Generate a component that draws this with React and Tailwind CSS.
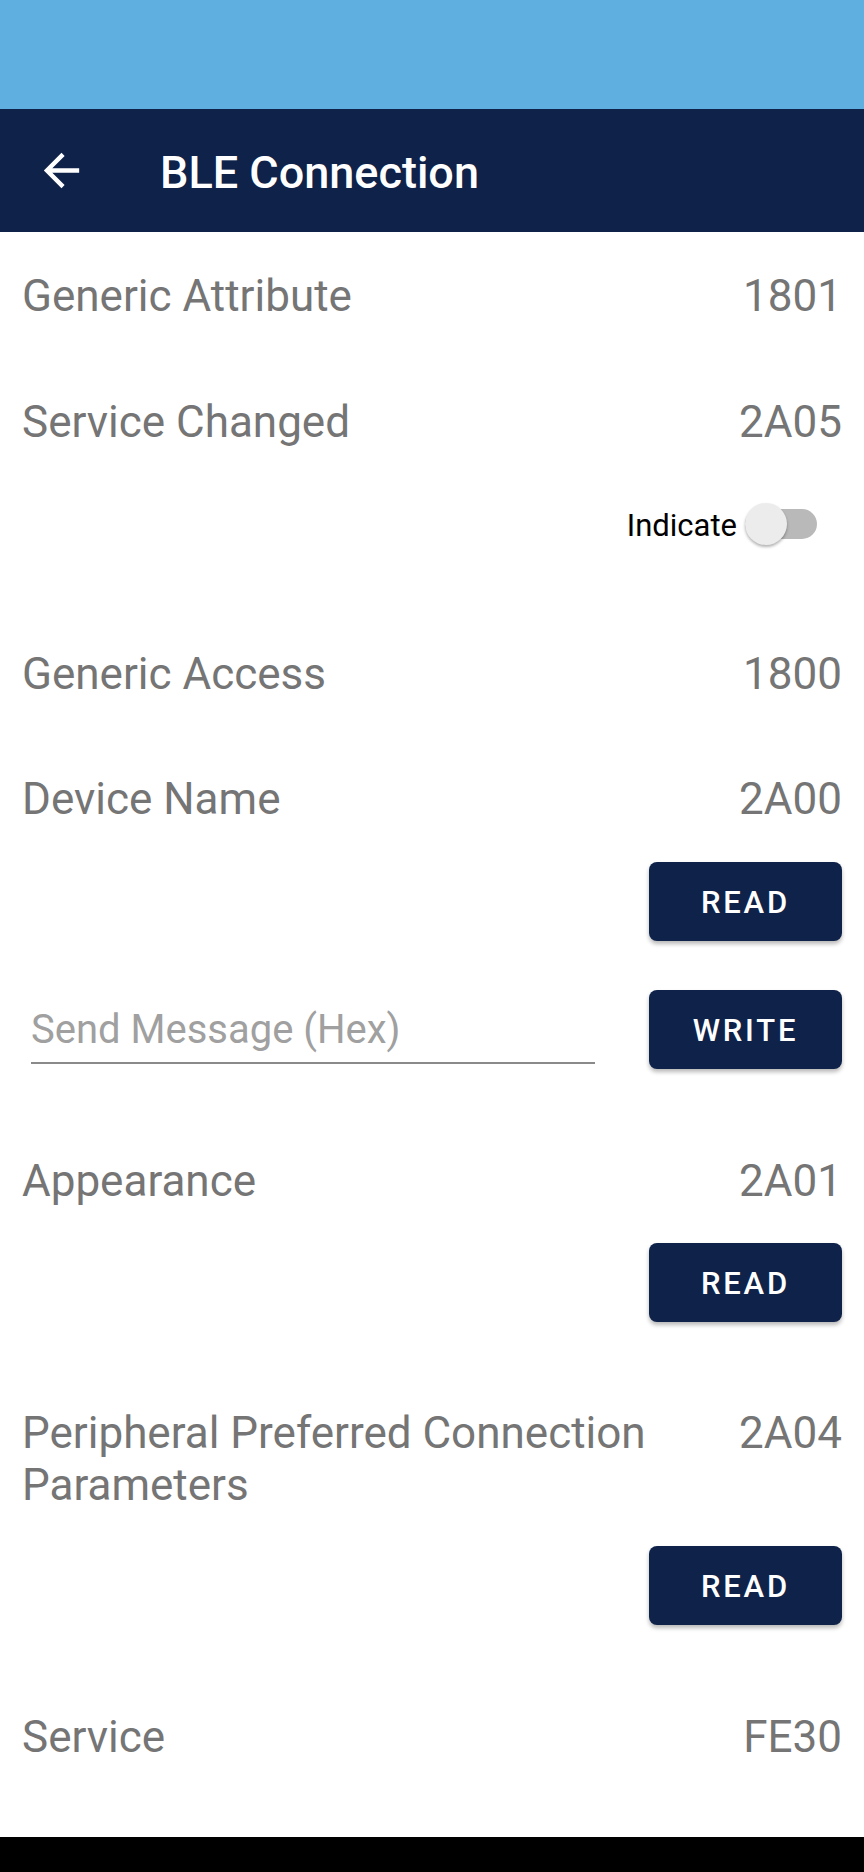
import React, { useState } from 'react'

function ReadButton({ label = 'READ' }) {
  return (
    <button className="w-[193px] h-[79px] shrink-0 pt-[4px] rounded-[8px] bg-[#0F2249] text-white text-[31px] font-medium tracking-[2.8px] shadow-[0_3px_4px_rgba(0,0,0,0.28)]">
      {label}
    </button>
  )
}

function Row({ label, value, className = '' }) {
  return (
    <div className={`flex justify-between gap-4 text-[44px] leading-[52px] text-[#757575] ${className}`}>
      <span className="flex-1 min-w-0">{label}</span>
      <span className="shrink-0 text-right">{value}</span>
    </div>
  )
}

export default function App() {
  const [indicate, setIndicate] = useState(false)
  const [message, setMessage] = useState('')

  return (
    <div className="w-[864px] h-[1872px] flex flex-col bg-white font-['Roboto',sans-serif]">
      {/* Status bar */}
      <div className="h-[109px] bg-[#5FAFE0]" />

      {/* Toolbar */}
      <header className="h-[123px] bg-[#0F2249] flex items-center">
        <div className="w-[123px] h-full flex items-center justify-center">
          <svg width="53" height="53" viewBox="0 0 24 24" fill="white">
            <path d="M20 11H7.83l5.59-5.59L12 4l-8 8 8 8 1.41-1.41L7.83 13H20v-2z" />
          </svg>
        </div>
        <h1 className="ml-[37px] pt-[4px] text-[45px] font-medium text-white">BLE Connection</h1>
      </header>

      {/* Services */}
      <div className="flex-1 flex flex-col px-[22px]">
        <Row label="Generic Attribute" value="1801" className="mt-[38px]" />
        <Row label="Service Changed" value="2A05" className="mt-[74px]" />

        <div className="mt-[54px] h-[44px] flex items-center justify-end">
          <span className="pt-[5px] text-[31px] text-black">Indicate</span>
          <button
            onClick={() => setIndicate(!indicate)}
            className="relative ml-[8px] mr-[25px] w-[72px] h-[44px]"
          >
            <span className={`absolute inset-x-0 top-[7px] h-[30px] rounded-full ${indicate ? 'bg-[#8a9bc0]' : 'bg-[#b9b9b9]'}`} />
            <span className={`absolute top-[1px] w-[42px] h-[42px] rounded-full shadow-[0_2px_3px_rgba(0,0,0,0.3)] ${indicate ? 'left-[30px] bg-[#0F2249]' : 'left-0 bg-[#ececec]'}`} />
          </button>
        </div>

        <Row label="Generic Access" value="1800" className="mt-[102px]" />
        <Row label="Device Name" value="2A00" className="mt-[73px]" />

        <div className="mt-[37px] flex justify-end">
          <ReadButton />
        </div>

        <div className="mt-[49px] flex items-start justify-between">
          <input
            value={message}
            onChange={(e) => setMessage(e.target.value)}
            placeholder="Send Message (Hex)"
            className="ml-[9px] mt-[13px] w-[564px] h-[61px] pb-[6px] border-b-2 border-[#8a8a8a] bg-transparent text-[40px] text-[#333] outline-none placeholder:text-[#a0a0a0]"
          />
          <ReadButton label="WRITE" />
        </div>

        <Row label="Appearance" value="2A01" className="mt-[86px]" />
        <div className="mt-[36px] flex justify-end">
          <ReadButton />
        </div>

        <Row label="Peripheral Preferred Connection Parameters" value="2A04" className="mt-[85px]" />
        <div className="mt-[35px] flex justify-end">
          <ReadButton />
        </div>

        <Row label="Service" value="FE30" className="mt-[86px]" />
      </div>

      {/* Navigation bar */}
      <div className="h-[35px] bg-black" />
    </div>
  )
}
